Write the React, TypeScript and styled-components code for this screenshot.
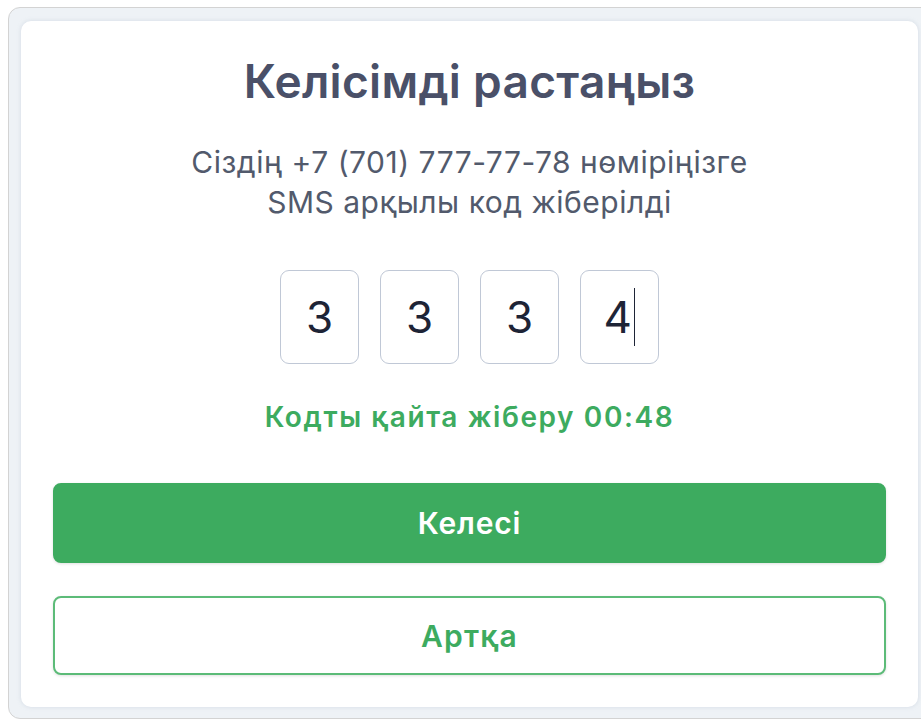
import React, { useState } from 'react'
import styled, { createGlobalStyle } from 'styled-components'

const GlobalStyle = createGlobalStyle`
    html, body {
        margin: 0;
        padding: 0;
        background: #ffffff;
        overflow: hidden;
    }
    body {
        font-family: Inter, 'Noto Sans', sans-serif;
    }
`

const Frame = styled.div`
    margin: 7px 0 0 8px;
    width: 925px;
    height: 712px;
    box-sizing: border-box;
    padding: 13px 12px 11px 12px;
    border: 1px solid #d3d3d3;
    border-radius: 12px;
    background: #eef2f6;
    display: flex;
`

const Card = styled.div`
    width: 897px;
    box-sizing: border-box;
    padding: 34px 32px 32px 32px;
    background: #ffffff;
    border-radius: 10px;
    box-shadow: 0 0 4px rgba(160, 175, 195, 0.35);
    display: flex;
    flex-direction: column;
    align-items: stretch;
`

const Title = styled.h1`
    margin: 0;
    font-size: 46px;
    line-height: 52px;
    font-weight: 600;
    letter-spacing: 0.3px;
    color: #4a5068;
    text-align: center;
`

const Hint = styled.p`
    margin: 35px 0 0 0;
    font-size: 30px;
    line-height: 40px;
    letter-spacing: 0.5px;
    color: #525a6c;
    text-align: center;
`

const CodeRow = styled.div`
    margin-top: 48px;
    display: flex;
    justify-content: center;
    gap: 21px;
`

const CodeCell = styled.div`
    width: 79px;
    height: 94px;
    box-sizing: border-box;
    border: 1.5px solid #c0c8d6;
    border-radius: 9px;
    display: flex;
    align-items: center;
    justify-content: center;
    font-size: 44px;
    color: #1e2436;
`

const Caret = styled.span`
    display: inline-block;
    width: 1.5px;
    height: 58px;
    margin-left: 2px;
    background: #1e2436;
`

const Resend = styled.div`
    margin-top: 36px;
    font-size: 28px;
    line-height: 34px;
    font-weight: 600;
    letter-spacing: 1.6px;
    color: #3dab5f;
    text-align: center;
`

const Button = styled.button<{ outline?: boolean }>`
    height: ${p => p.outline ? 79 : 80}px;
    box-sizing: border-box;
    border-radius: 8px;
    font-family: inherit;
    font-size: 30px;
    font-weight: 600;
    letter-spacing: ${p => p.outline ? 1.2 : 0.8}px;
    cursor: pointer;
    border: 2px solid ${p => p.outline ? '#5cbb78' : '#3dab5f'};
    background: ${p => p.outline ? '#ffffff' : '#3dab5f'};
    color: ${p => p.outline ? '#3dab5f' : '#ffffff'};
    box-shadow: 0 1px 3px rgba(0, 0, 0, 0.12);
`

const ButtonGroup = styled.div`
    margin-top: 49px;
    display: flex;
    flex-direction: column;
    gap: 33px;
`

const App: React.FC = () => {
    const [code] = useState(['3', '3', '3', '4'])
    return (
        <>
            <GlobalStyle />
            <Frame>
                <Card>
                    <Title>Келісімді растаңыз</Title>
                    <Hint>
                        Сіздің +7 (701) 777-77-78 нөміріңізге<br />
                        SMS арқылы код жіберілді
                    </Hint>
                    <CodeRow>
                        {code.map((digit, index) => (
                            <CodeCell key={index}>
                                {digit}
                                {index === code.length - 1 ? <Caret /> : null}
                            </CodeCell>
                        ))}
                    </CodeRow>
                    <Resend>Кодты қайта жіберу 00:48</Resend>
                    <ButtonGroup>
                        <Button>Келесі</Button>
                        <Button outline>Артқа</Button>
                    </ButtonGroup>
                </Card>
            </Frame>
        </>
    )
}

export default App
